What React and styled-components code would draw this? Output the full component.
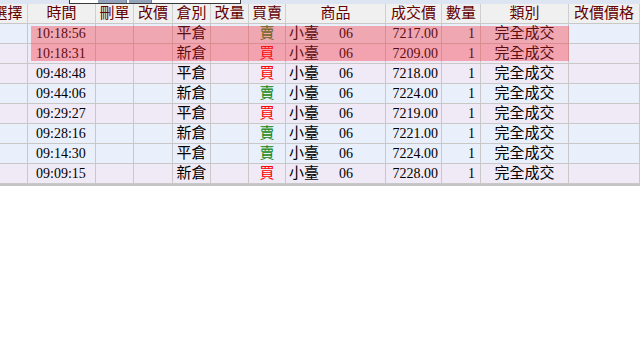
import React from 'react';
import styled, { createGlobalStyle } from 'styled-components';

const GlobalStyle = createGlobalStyle`
  html, body {
    margin: 0;
    padding: 0;
    background: #ffffff;
  }
  body {
    font-family: "Liberation Serif", "Noto Sans CJK TC", serif;
  }
`;

const COLS = '40px 68px 38px 39px 38px 38px 37px 100px 56px 39px 88px 71px';

const columns = [
  { key: 'pick', title: '選擇' },
  { key: 'time', title: '時間' },
  { key: 'del', title: '刪單' },
  { key: 'chg', title: '改價' },
  { key: 'pos', title: '倉別' },
  { key: 'qtyChg', title: '改量' },
  { key: 'side', title: '買賣' },
  { key: 'prod', title: '商品' },
  { key: 'price', title: '成交價' },
  { key: 'qty', title: '數量' },
  { key: 'kind', title: '類別' },
  { key: 'newPrice', title: '改價價格' },
];

const orders = [
  { time: '10:18:56', pos: '平倉', side: 'sell', price: '7217.00' },
  { time: '10:18:31', pos: '新倉', side: 'buy', price: '7209.00' },
  { time: '09:48:48', pos: '平倉', side: 'buy', price: '7218.00' },
  { time: '09:44:06', pos: '新倉', side: 'sell', price: '7224.00' },
  { time: '09:29:27', pos: '平倉', side: 'buy', price: '7219.00' },
  { time: '09:28:16', pos: '新倉', side: 'sell', price: '7221.00' },
  { time: '09:14:30', pos: '平倉', side: 'sell', price: '7224.00' },
  { time: '09:09:15', pos: '新倉', side: 'buy', price: '7228.00' },
];

const Page = styled.div`
  width: 640px;
  height: 350px;
  background: #ffffff;
  overflow: hidden;
`;

const TopStrip = styled.div`
  height: 4px;
  background: #dce5f1;
  display: flex;
  align-items: flex-start;
`;

const Scroller = styled.div`
  margin-left: 69px;
  width: 170px;
  height: 3px;
  border: 1px solid #3a3a3a;
  border-top: none;
  background: #ffffff;
  display: flex;
`;

const Thumb = styled.div`
  margin-left: ${(p) => p.$offset}px;
  width: ${(p) => p.$width}px;
  height: 100%;
  background: #93a3bb;
  border-right: 1px solid #6f7f98;
`;

const Viewport = styled.div`
  width: 640px;
  overflow: hidden;
  border-bottom: 2px solid #c4c4c4;
`;

const Grid = styled.div`
  margin-left: -12px;
  width: 652px;
`;

const HeaderRow = styled.div`
  display: grid;
  grid-template-columns: ${COLS};
  height: 20px;
  background: #f0f0f0;
  border-bottom: 1px solid #c8c8c8;
  box-sizing: border-box;
`;

const HeaderCell = styled.div`
  border-right: 1px solid #cfcfcf;
  color: #640000;
  font-size: 15px;
  line-height: 19px;
  text-align: center;
  white-space: nowrap;
  overflow: hidden;
`;

const Body = styled.div`
  position: relative;
`;

const Row = styled.div`
  display: grid;
  grid-template-columns: ${COLS};
  height: 20px;
  box-sizing: border-box;
  border-bottom: 1px solid #c8c8c8;
  background: ${(p) => (p.$side === 'sell' ? '#e9effb' : '#f0eaf6')};

  &:last-child {
    border-bottom: none;
  }
`;

const Cell = styled.div`
  border-right: 1px solid #c8c8c8;
  color: #000000;
  font-size: ${(p) => (p.$num ? '14px' : '15px')};
  line-height: 19px;
  white-space: nowrap;
  overflow: hidden;
  text-align: ${(p) => p.$align || 'center'};
  padding: ${(p) => p.$pad || '0'};
`;

const Side = styled.span`
  color: ${(p) => (p.$side === 'sell' ? '#138a13' : '#ff0000')};
`;

const Month = styled.span`
  display: inline-block;
  margin-left: 20px;
  font-size: 14px;
`;

const Selection = styled.div`
  position: absolute;
  left: 43px;
  top: 2px;
  width: 538px;
  height: 35px;
  background: rgba(250, 40, 50, 0.36);
  pointer-events: none;
`;

function OrderRow({ order }) {
  return (
    <Row $side={order.side}>
      <Cell />
      <Cell $num $align='left' $pad='0 0 0 8px'>
        {order.time}
      </Cell>
      <Cell />
      <Cell />
      <Cell>{order.pos}</Cell>
      <Cell />
      <Cell>
        <Side $side={order.side}>{order.side === 'sell' ? '賣' : '買'}</Side>
      </Cell>
      <Cell $align='left' $pad='0 0 0 3px'>
        小臺
        <Month>06</Month>
      </Cell>
      <Cell $num $align='right' $pad='0 3px 0 0'>
        {order.price}
      </Cell>
      <Cell $num $align='right' $pad='0 5px 0 0'>
        1
      </Cell>
      <Cell>完全成交</Cell>
      <Cell />
    </Row>
  );
}

export default function App() {
  return (
    <Page>
      <GlobalStyle />
      <TopStrip>
        <Scroller>
          <Thumb $offset={28} $width={28} />
          <Thumb $offset={2} $width={22} />
        </Scroller>
      </TopStrip>
      <Viewport>
        <Grid>
          <HeaderRow>
            {columns.map((c) => (
              <HeaderCell key={c.key}>{c.title}</HeaderCell>
            ))}
          </HeaderRow>
          <Body>
            {orders.map((o) => (
              <OrderRow key={o.time} order={o} />
            ))}
            <Selection />
          </Body>
        </Grid>
      </Viewport>
    </Page>
  );
}
